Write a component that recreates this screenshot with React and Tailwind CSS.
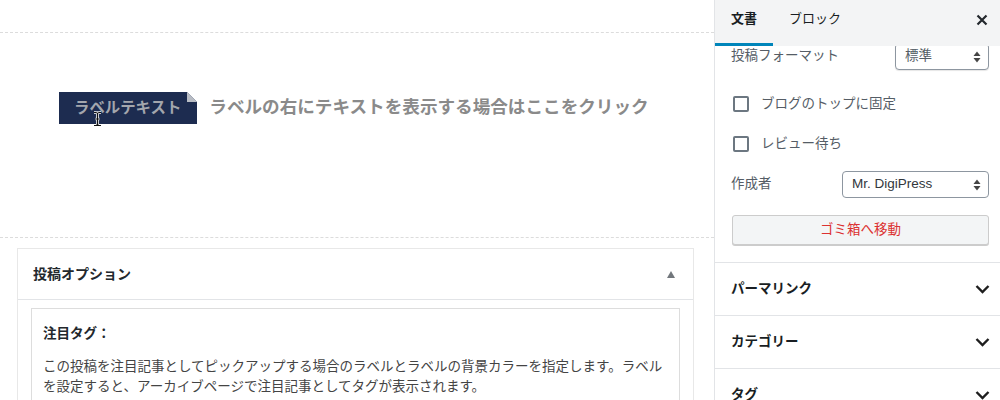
import React from "react";

const FONT = { fontFamily: '"Liberation Sans", "Noto Sans CJK JP", sans-serif' };

function Chevron() {
  return (
    <svg width="15" height="10" viewBox="0 0 15 10" className="shrink-0">
      <polyline points="1.5,2 7.5,8 13.5,2" fill="none" stroke="#1e1e1e" strokeWidth="2.4" />
    </svg>
  );
}

function SelectArrows() {
  return (
    <svg width="8" height="12" viewBox="0 0 8 12" className="shrink-0">
      <polygon points="4,0.5 7.5,5 0.5,5" fill="#444" />
      <polygon points="4,11.5 7.5,7 0.5,7" fill="#444" />
    </svg>
  );
}

function Checkbox() {
  return <div className="w-[16px] h-[16px] rounded-[2px] border-[2px] border-[#6c7781] bg-white shrink-0" />;
}

function Section({ title }) {
  return (
    <div className="h-[53px] border-t border-[#e2e4e7] flex items-center justify-between pl-[16px] pr-[10px]">
      <span className="text-[13.5px] font-bold text-[#191e23]">{title}</span>
      <Chevron />
    </div>
  );
}

export default function App() {
  return (
    <div className="w-[1000px] h-[400px] overflow-hidden bg-white flex" style={FONT}>
      {/* Main editor area */}
      <div className="w-[714px] shrink-0 flex flex-col">
        <div className="h-[33px] border-b border-dashed border-[#dcdcdc] shrink-0" />
        <div className="h-[205px] border-b border-dashed border-[#dcdcdc] shrink-0 pt-[59px] pl-[59px]">
          <div className="flex items-center">
            <div className="relative h-[32px] bg-[#1d2c50] pl-[15px] pr-[16px] flex items-center">
              <span className="text-[15.4px] font-bold text-[#a3a6ad] leading-none">ラベルテキスト</span>
              <svg width="10" height="10" viewBox="0 0 10 10" className="absolute top-0 right-0">
                <polygon points="0,0 10,0 10,10" fill="#ffffff" />
                <polygon points="0,0 10,10 0,10" fill="#b8bcc4" />
              </svg>
              <svg width="9" height="16" viewBox="0 0 9 16" className="absolute left-[34px] top-[19px]">
                <path d="M1 1.5 H3 Q4.5 1.5 4.5 3.5 V12.5 Q4.5 14.5 3 14.5 H1 M8 1.5 H6 Q4.5 1.5 4.5 3.5 M4.5 12.5 Q4.5 14.5 6 14.5 H8 M2.5 8 H6.5" fill="none" stroke="#ffffff" strokeWidth="2.6" />
                <path d="M1 1.5 H3 Q4.5 1.5 4.5 3.5 V12.5 Q4.5 14.5 3 14.5 H1 M8 1.5 H6 Q4.5 1.5 4.5 3.5 M4.5 12.5 Q4.5 14.5 6 14.5 H8 M2.5 8 H6.5" fill="none" stroke="#111" strokeWidth="1.1" />
              </svg>
            </div>
            <span className="ml-[12px] text-[17.6px] font-bold text-[#8a8a8a] leading-none whitespace-nowrap">
              ラベルの右にテキストを表示する場合はここをクリック
            </span>
          </div>
        </div>
        <div className="mt-[10px] ml-[17px] w-[677px] border border-[#e8e8e8] border-b-0 shrink-0">
          <div className="h-[51px] border-b border-[#e2e4e7] flex items-center justify-between pl-[15px] pr-[18px]">
            <span className="text-[14px] font-bold text-[#23282d]">投稿オプション</span>
            <svg width="8" height="7" viewBox="0 0 8 7">
              <polygon points="4,0 8,7 0,7" fill="#72777c" />
            </svg>
          </div>
          <div className="mt-[8px] ml-[13px] w-[649px] border border-[#dddddd] px-[11px] pt-[15px] pb-[20px]">
            <div className="text-[13.5px] font-bold text-[#23282d] leading-[20px]">注目タグ：</div>
            <p className="mt-[13px] text-[13.5px] text-[#444444] leading-[20px]">
              この投稿を注目記事としてピックアップする場合のラベルとラベルの背景カラーを指定します。ラベルを設定すると、アーカイブページで注目記事としてタグが表示されます。
            </p>
          </div>
        </div>
      </div>

      {/* Sidebar */}
      <div className="w-[286px] shrink-0 border-l border-[#e2e4e7] flex flex-col">
        <div className="relative z-10 h-[46px] bg-[#f3f4f5] flex items-stretch shrink-0">
          <div className="w-[58px] pl-[16px] flex items-center border-b-[3px] border-[#0085ba] pb-[5px]">
            <span className="text-[13px] font-bold text-[#191e23]">文書</span>
          </div>
          <div className="pl-[16px] flex items-center pb-[8px]">
            <span className="text-[13px] text-[#191e23]">ブロック</span>
          </div>
          <div className="ml-auto pr-[12px] flex items-center pb-[6px]">
            <svg width="12" height="12" viewBox="0 0 12 12">
              <path d="M1.5 1.5 L10.5 10.5 M10.5 1.5 L1.5 10.5" stroke="#23282d" strokeWidth="2.2" />
            </svg>
          </div>
        </div>

        <div className="pl-[16px] pr-[11px] flex flex-col shrink-0">
          <div className="-mt-[3px] h-[27px] flex items-center justify-between">
            <span className="text-[13.5px] text-[#555d66]">投稿フォーマット</span>
            <div className="w-[94px] h-[27px] rounded-[4px] border border-[#8d96a0] bg-white flex items-center justify-between pl-[9px] pr-[7px] shadow-[0_1px_1px_rgba(0,0,0,0.1)]">
              <span className="text-[13.5px] text-[#555d66]">標準</span>
              <SelectArrows />
            </div>
          </div>
          <div className="mt-[26px] h-[16px] flex items-center pl-[2px]">
            <Checkbox />
            <span className="ml-[12px] text-[13.5px] text-[#555d66]">ブログのトップに固定</span>
          </div>
          <div className="mt-[24px] h-[16px] flex items-center pl-[2px]">
            <Checkbox />
            <span className="ml-[12px] text-[13.5px] text-[#555d66]">レビュー待ち</span>
          </div>
          <div className="mt-[19px] h-[27px] flex items-center justify-between">
            <span className="text-[13.5px] text-[#555d66]">作成者</span>
            <div className="w-[147px] h-[27px] rounded-[4px] border border-[#8d96a0] bg-white flex items-center justify-between pl-[9px] pr-[7px]">
              <span className="text-[13.5px] text-[#32373c]">Mr. DigiPress</span>
              <SelectArrows />
            </div>
          </div>
          <div className="mt-[17px] ml-[1px] h-[30px] rounded-[3px] border border-[#cccccc] bg-[#f3f5f6] shadow-[0_1px_0_#cccccc] flex items-center justify-center">
            <span className="text-[13.5px] text-[#dc3232]">ゴミ箱へ移動</span>
          </div>
        </div>

        <div className="mt-[17px] flex flex-col">
          <Section title="パーマリンク" />
          <Section title="カテゴリー" />
          <Section title="タグ" />
        </div>
      </div>
    </div>
  );
}
